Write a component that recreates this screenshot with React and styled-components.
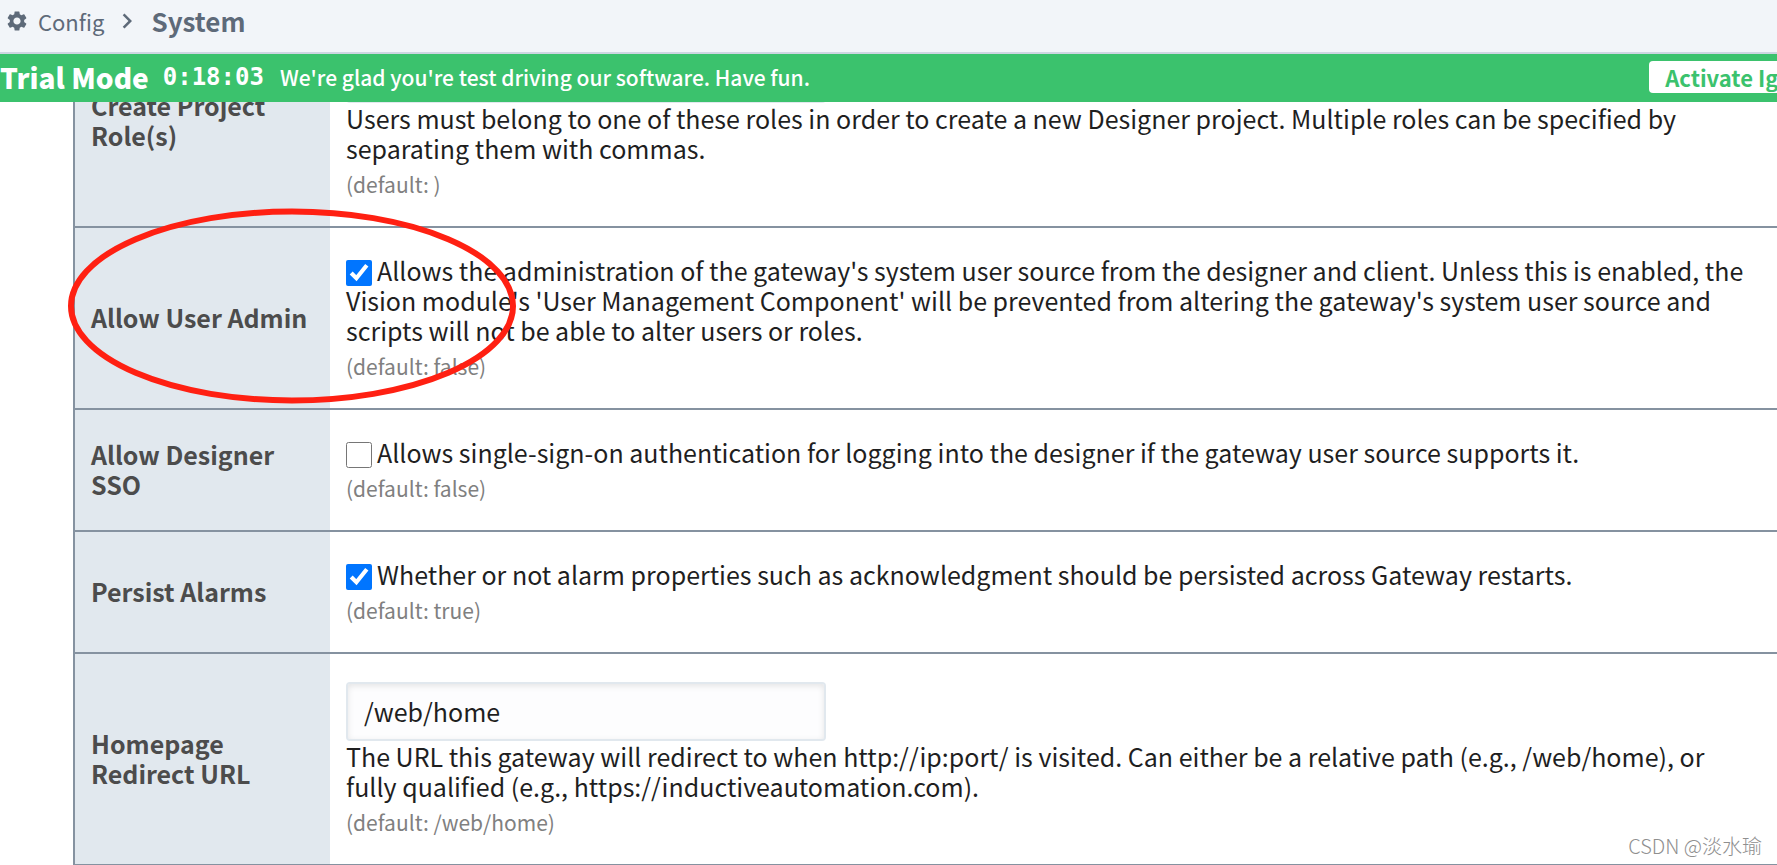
import React, { useState } from "react";
import styled, { createGlobalStyle } from "styled-components";
import { MdSettings, MdChevronRight } from "react-icons/md";

const GlobalStyle = createGlobalStyle`
  * {
    box-sizing: border-box;
  }

  body {
    margin: 0;
    background-color: #fff;
    color: #1f1f1f;
    font-family: "Noto Sans CJK SC", "Noto Sans", sans-serif;
    font-size: 25px;
    line-height: 30px;
  }
`;

const Page = styled.div`
  height: 100vh;
  display: flex;
  flex-direction: column;
  overflow: hidden;
`;

const Breadcrumb = styled.nav`
  flex: none;
  display: flex;
  align-items: center;
  height: 54px;
  padding: 0 5px 10px;
  background-color: #f2f5f9;
  border-bottom: 2px solid #cdd6e1;
  color: #5e6a79;
`;

const CrumbLink = styled.a`
  display: flex;
  align-items: center;
  gap: 9px;
  margin-right: 8px;
  color: inherit;
  font-size: 22px;
  text-decoration: none;
`;

const Current = styled.span`
  margin-left: 9px;
  font-size: 26px;
  font-weight: 700;
`;

const TrialBar = styled.div`
  flex: none;
  display: flex;
  align-items: center;
  height: 48px;
  padding-bottom: 3px;
  overflow: hidden;
  background-color: #3bc26d;
  color: #fff;
  white-space: nowrap;
`;

const TrialTitle = styled.strong`
  font-size: 28px;
  font-weight: 900;
`;

const Timer = styled.span`
  margin: 0 16px 0 14px;
  font-family: "DejaVu Sans Mono", monospace;
  font-size: 24px;
  font-weight: 700;
`;

const TrialText = styled.span`
  font-size: 21px;
  font-weight: 500;
`;

const ActivateButton = styled.button`
  flex: none;
  height: 32px;
  margin-left: auto;
  margin-right: -82px;
  padding: 0 16px;
  border: none;
  border-radius: 4px;
  background-color: #fff;
  color: #3bc26d;
  font-family: inherit;
  font-size: 22px;
  font-weight: 700;
  line-height: 30px;
  cursor: pointer;
`;

const Content = styled.main`
  position: relative;
  flex: 1;
  min-height: 0;
  overflow: hidden;
  padding-left: 73px;
`;

/* scrolled part way into the first row */
const SettingsTable = styled.table`
  width: 100%;
  margin-top: -86px;
  border-spacing: 0;
  border-left: 2px solid #8592a0;
`;

const LabelCell = styled.th`
  width: 255px;
  padding: 0 16px 2px;
  border-bottom: 2px solid #8592a0;
  background-color: #e1e8ee;
  color: #4c4c4c;
  font-weight: 700;
  text-align: left;
  vertical-align: middle;
`;

const ValueCell = styled.td`
  padding: 27px 20px 27px 16px;
  border-bottom: 2px solid #8592a0;
  vertical-align: top;
`;

const TextInput = styled.input`
  display: block;
  width: 480px;
  height: 59px;
  margin-top: 1px;
  padding: 0 16px 2px;
  border: 2px solid #e1e8ee;
  border-radius: 4px;
  background-color: #fdfdfe;
  box-shadow: inset 0 2px 6px rgba(0, 0, 0, 0.1);
  color: inherit;
  font: inherit;
`;

const Checkbox = styled.input`
  width: 26px;
  height: 26px;
  margin: 5px 5px -1px 0;
  vertical-align: top;
`;

const Description = styled.div`
  min-height: 30px;
`;

const DefaultValue = styled.div`
  margin-top: 6px;
  color: #808080;
  font-size: 21px;
`;

const Highlight = styled.svg`
  position: absolute;
  top: 104px;
  left: 66px;
  width: 452px;
  height: 200px;
  pointer-events: none;
`;

const Watermark = styled.span`
  position: absolute;
  right: 15px;
  bottom: 4px;
  color: #8f8f8f;
  font-size: 20px;
  font-weight: 300;
`;

const settings = [
  {
    id: "create-project-roles",
    label: "Create Project Role(s)",
    type: "text",
    value: "",
    text: "Users must belong to one of these roles in order to create a new Designer project. Multiple roles can be specified by separating them with commas.",
    def: "",
  },
  {
    id: "allow-user-admin",
    label: "Allow User Admin",
    type: "checkbox",
    value: true,
    text: "Allows the administration of the gateway's system user source from the designer and client. Unless this is enabled, the Vision module's 'User Management Component' will be prevented from altering the gateway's system user source and scripts will not be able to alter users or roles.",
    def: "false",
  },
  {
    id: "allow-designer-sso",
    label: "Allow Designer SSO",
    type: "checkbox",
    value: false,
    text: "Allows single-sign-on authentication for logging into the designer if the gateway user source supports it.",
    def: "false",
  },
  {
    id: "persist-alarms",
    label: "Persist Alarms",
    type: "checkbox",
    value: true,
    text: "Whether or not alarm properties such as acknowledgment should be persisted across Gateway restarts.",
    def: "true",
  },
  {
    id: "homepage-redirect-url",
    label: "Homepage Redirect URL",
    type: "text",
    value: "/web/home",
    text: "The URL this gateway will redirect to when http://ip:port/ is visited. Can either be a relative path (e.g., /web/home), or fully qualified (e.g., https://inductiveautomation.com).",
    def: "/web/home",
  },
];

const SettingRow = ({ setting }) => {
  const [value, setValue] = useState(setting.value);
  const isCheckbox = setting.type === "checkbox";

  return (
    <tr>
      <LabelCell scope="row">
        <label htmlFor={setting.id}>{setting.label}</label>
      </LabelCell>
      <ValueCell>
        {!isCheckbox && (
          <TextInput
            id={setting.id}
            type="text"
            value={value}
            onChange={(e) => setValue(e.target.value)}
          />
        )}
        <Description>
          {isCheckbox && (
            <Checkbox
              id={setting.id}
              type="checkbox"
              checked={value}
              onChange={(e) => setValue(e.target.checked)}
            />
          )}
          {setting.text}
        </Description>
        <DefaultValue>(default: {setting.def})</DefaultValue>
      </ValueCell>
    </tr>
  );
};

const App = () => {
  return (
    <>
      <GlobalStyle />
      <Page>
        <Breadcrumb aria-label="Breadcrumb">
          <CrumbLink href="#config">
            <MdSettings size={24} />
            Config
          </CrumbLink>
          <MdChevronRight size={30} />
          <Current>System</Current>
        </Breadcrumb>
        <TrialBar>
          <TrialTitle>Trial Mode</TrialTitle>
          <Timer>0:18:03</Timer>
          <TrialText>We're glad you're test driving our software. Have fun.</TrialText>
          <ActivateButton type="button">Activate Ignition</ActivateButton>
        </TrialBar>
        <Content>
          <SettingsTable>
            <tbody>
              {settings.map((setting) => (
                <SettingRow key={setting.id} setting={setting} />
              ))}
            </tbody>
          </SettingsTable>
          <Highlight viewBox="0 0 452 200" aria-hidden="true">
            <ellipse cx="226" cy="100" rx="221" ry="94.5" fill="none" stroke="#ff2012" strokeWidth="6" />
          </Highlight>
          <Watermark>CSDN @淡水瑜</Watermark>
        </Content>
      </Page>
    </>
  );
};

export default App;
